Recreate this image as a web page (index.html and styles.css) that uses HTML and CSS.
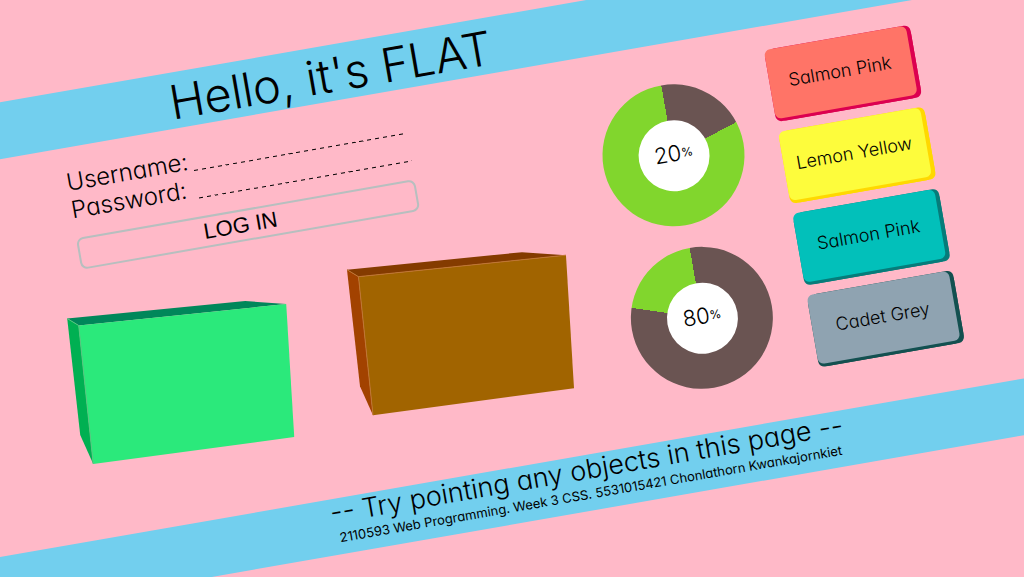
FILE: index.html
```html
<!DOCTYPE html>
<html lang="en">
<head>
<meta charset="utf-8">
<meta name="viewport" content="width=device-width, initial-scale=1">
<title>Hello, it's FLAT</title>
<link rel="stylesheet" href="styles.css">
</head>
<body>
<div class="stage">
  <header class="band">
    <h1 class="title">Hello, it's FLAT</h1>
  </header>
  <main class="content">
    <section class="left">
      <form class="login">
        <div class="field"><label for="user">Username:</label><input id="user" type="text"></div>
        <div class="field"><label for="pass">Password:</label><input id="pass" type="password"></div>
        <button class="submit" type="button">LOG IN</button>
      </form>
      <div class="boxes">
        <svg class="box green" viewBox="-142 -100 284 200" aria-hidden="true">
          <g transform="rotate(9.9)">
            <polygon class="top" points="-113,-64 65,-81.5 106,-78.5 -101.5,-57"/>
            <polygon class="side" points="-113,-64 -101.5,-57 -87,81.5 -100,52.5"/>
            <polygon class="front" points="-101.5,-57 106,-78.5 114,54.5 -87,81.5"/>
            <polyline class="edge" points="-113,-64 -101.5,-57 -87,81.5"/>
          </g>
        </svg>
        <svg class="box brown" viewBox="-142 -100 284 200" aria-hidden="true">
          <g transform="rotate(9.9)">
            <polygon class="top" points="-113,-64 62,-81.5 106,-78.5 -101.5,-57"/>
            <polygon class="side" points="-113,-64 -101.5,-57 -87,81.5 -100,52.5"/>
            <polygon class="front" points="-101.5,-57 106,-78.5 114,54.5 -87,81.5"/>
            <polyline class="edge" points="-113,-64 -101.5,-57 -87,81.5"/>
            <polyline class="edge" points="-101.5,-57 106,-78.5"/>
          </g>
        </svg>
      </div>
    </section>
    <section class="charts">
      <div class="donut" style="--part:20%"><div class="hole">20<span class="pct">%</span></div></div>
      <div class="donut" style="--part:80%"><div class="hole">80<span class="pct">%</span></div></div>
    </section>
    <section class="swatches">
      <button class="swatch salmon" type="button">Salmon Pink</button>
      <button class="swatch lemon" type="button">Lemon Yellow</button>
      <button class="swatch teal" type="button">Salmon Pink</button>
      <button class="swatch cadet" type="button">Cadet Grey</button>
    </section>
  </main>
  <footer class="band foot">
    <p class="hint">-- Try pointing any objects in this page --</p>
    <p class="credit">2110593 Web Programming. Week 3 CSS. 5531015421 Chonlathorn Kwankajornkiet</p>
  </footer>
</div>
</body>
</html>
```
FILE: styles.css
```css
* { box-sizing: border-box; }
body {
  margin: 0;
  height: 100vh;
  overflow: hidden;
  background: #ffb9c8;
  color: #000;
  font-family: Inter, "Open Sans", sans-serif;
  font-feature-settings: "cv11";
}
h1, p { margin: 0; font-weight: 400; }
button, input { font: inherit; color: inherit; font-feature-settings: inherit; }
.stage {
  width: 120vw;
  min-height: 100vh;
  margin-left: -10vw;
  padding-top: 17px;
  transform: rotate(-9.9deg);
}
.band { background: #72cfee; min-height: 56px; }
.title {
  max-width: 923px;
  margin: 0 auto;
  padding-left: 156px;
  font-size: 47px;
  line-height: 60px;
  height: 56px;
  font-weight: 300;
  white-space: nowrap;
}
.content {
  display: grid;
  grid-template-columns: 568px 142px 156px;
  justify-content: center;
  align-items: start;
  column-gap: 28px;
  padding: 21px 48px 41px 0;
}
.login { width: 344px; margin-left: 64px; font-size: 24px; }
.field { display: flex; justify-content: space-between; height: 28px; line-height: 28px; font-weight: 300; }
.field input {
  width: 216px;
  height: 24px;
  padding: 0;
  border: 0;
  outline: 0;
  background: repeating-linear-gradient(90deg, #000 0 4px, transparent 4px 8px) left bottom / 100% 1px no-repeat;
}
.submit {
  width: 100%;
  height: 32px;
  margin-top: 14px;
  padding: 0 16px 0 0;
  border: 2px solid #b7bfbf;
  border-radius: 7px;
  background: none;
  font-family: "Liberation Sans", Arial, sans-serif;
  font-size: 22px;
  line-height: 28px;
  display: block;
}
.boxes { display: flex; margin-top: 28px; }
.box { width: 284px; height: 200px; display: block; overflow: visible; }
.green .front { fill: #2be97b; }
.green .side { fill: #00b052; }
.green .top { fill: #00875a; }
.brown .front { fill: #a16400; }
.brown .side { fill: #a24200; }
.brown .top { fill: #843b00; }
.edge { fill: none; stroke-width: 1; }
.green .edge { stroke: #55c77f; }
.brown .edge { stroke: #bf7634; }
.charts { display: grid; gap: 23px; padding-top: 20px; }
.donut {
  display: grid;
  place-items: center;
  height: 142px;
  border-radius: 50%;
  background: conic-gradient(#6a5452 var(--part), #81d62d 0);
}
.hole {
  width: 71px;
  height: 71px;
  border-radius: 50%;
  background: #fff;
  text-align: center;
  font-size: 22px;
  font-weight: 300;
  line-height: 66px;
}
.pct { font-size: 12px; font-weight: 400; line-height: 1; vertical-align: 3px; }
.swatches { display: grid; gap: 13px; padding: 3px 0 0 8px; }
.swatch {
  width: 144px;
  height: 70px;
  padding: 0 2px 3px 0;
  border: 0;
  border-radius: 6px;
  font-size: 18px;
  font-weight: 300;
  background: var(--face);
  box-shadow: 4px 0 var(--edge), 0 3px var(--edge), 4px 3px var(--edge);
}
.salmon { --face: #ff7467; --edge: #dc0050; }
.lemon { --face: #fdfc3c; --edge: #ffd800; }
.teal { --face: #02c0ba; --edge: #067c7a; }
.cadet { --face: #8fa3b1; --edge: #135050; }
.foot { padding-left: 84px; text-align: center; white-space: nowrap; }
.hint { font-size: 27px; line-height: 30px; font-weight: 300; }
.credit { font-size: 13px; line-height: 18px; }
```
